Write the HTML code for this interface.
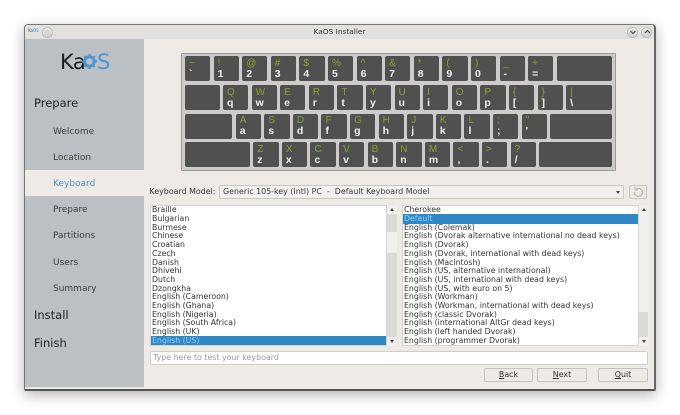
<!DOCTYPE html>
<html><head><meta charset="utf-8"><style>
html,body{margin:0;padding:0;background:#fff}
body{width:680px;height:415px;position:relative;overflow:hidden;font-family:"DejaVu Sans",sans-serif;font-size:8px;color:#3a3a3a;filter:blur(.3px)}
div{position:absolute;box-sizing:border-box}
#win{left:24px;top:24px;width:632px;height:367px;background:#eeebe6;border:1px solid #777;border-bottom:2px solid #555;border-right:2px solid #666;border-radius:4px 4px 2px 2px;box-shadow:0 4px 14px rgba(0,0,0,.3)}
#tb{left:25px;top:25px;width:629px;height:14px;background:#e3e1de;border-radius:3px 3px 0 0;text-align:center;font-size:7.4px;line-height:14px;color:#333}
#side{left:25px;top:39px;width:119px;height:348px;background:#bbc0c4}
#sel{left:25px;top:170px;width:119px;height:26px;background:#eeebe6}
.h{left:34px;font-size:11.5px;line-height:14px;color:#222}
.n{left:53px;font-size:9px;line-height:12px;color:#3c3c3c}
#kb{left:181px;top:53px;width:435px;height:118px;background:#cdccca;border:1px solid #9a9a98}
.r{display:flex;gap:3.3px;left:185px;height:25px;width:428px}
.r span{display:block;position:relative;flex:none;width:25.3px;height:25px;background:#505050;border-radius:2px}
.r b,.r i{position:absolute;left:4px;font-family:"Liberation Sans",sans-serif;font-style:normal;line-height:11px}
.r b{top:1.5px;color:#87a52e;font-size:10px;font-weight:normal}
.r i{top:12.5px;color:#f0f0f0;font-size:10.5px;font-weight:bold}
.lst{background:#fff;top:205px;height:141px;overflow:hidden;border:1px solid #d5d3cf;padding-top:.4px}
.lst p{margin:0;padding-left:1px;height:8.7px;line-height:8.7px;white-space:nowrap;font-size:7.8px;color:#333}
.lst p.s{background:#3088c6;color:#8fd0f5;margin-top:-.7px;padding-top:.7px;box-sizing:border-box;height:9.4px}
.sb{top:205px;width:10px;height:141px;background:#dcdad7}
.th{left:0;width:10px;background:#f1f0ee}
.up,.dn{left:2.5px;width:0;height:0;border-left:2.5px solid transparent;border-right:2.5px solid transparent}
.up{top:3px;border-bottom:3px solid #444}
.dn{bottom:3px;border-top:3px solid #444}
.btn{top:368px;height:14px;background:#eeebe6;border:1px solid #c6c3bd;border-radius:2px;text-align:center;line-height:12px;color:#333;font-size:7.9px}
u{text-decoration:underline}
.wb{width:11px;height:11px;top:26.5px;border-radius:50%;background:#d8d7d5;border:1px solid #bbb;box-shadow:inset 0 1px 1px #fff}
</style></head><body>
<div id="win"></div>
<div id="tb">KaOS Installer</div>
<div class="wb" style="left:42px"></div>
<div class="wb" style="left:626.5px"></div>
<div class="wb" style="left:641px"></div>
<div style="left:28px;top:28px;font-size:4px;line-height:6px;color:#456">Ka<span style="color:#48c">OS</span></div>
<svg style="position:absolute;left:628px;top:27px" width="26" height="10"><path d="M2.5 4l2.5 2.5 2.5-2.5" fill="none" stroke="#444" stroke-width="1"/><path d="M17 6l2.5-2.5 2.5 2.5" fill="none" stroke="#444" stroke-width="1"/></svg>
<div id="side"></div>
<div id="sel"></div>
<div style="left:60px;top:50px;font-family:'DejaVu Sans',sans-serif;font-size:21px;line-height:24px;color:#1c1c1c;letter-spacing:-.5px;white-space:nowrap">Ka</div>
<svg style="position:absolute;left:81px;top:53px" width="17" height="17" viewBox="0 0 17 17"><circle cx="8.5" cy="8.5" r="4.7" fill="none" stroke="#4a97d2" stroke-width="3"/><path d="M8.5 1v15M1 8.5h15M3.2 3.2l10.6 10.6M13.8 3.2L3.2 13.8" stroke="#4a97d2" stroke-width="2.2" stroke-dasharray="2.6 9.8 2.6 0"/></svg>
<div style="left:97px;top:50px;font-family:'DejaVu Sans',sans-serif;font-size:21px;line-height:24px;color:#4a97d2">S</div>
<div class="h" style="top:96px">Prepare</div>
<div class="n" style="top:124.5px;top:126px">Welcome</div>
<div class="n" style="top:152px">Location</div>
<div class="n" style="top:178px;color:#4f93cf">Keyboard</div>
<div class="n" style="top:204px">Prepare</div>
<div class="n" style="top:230px">Partitions</div>
<div class="n" style="top:257px">Users</div>
<div class="n" style="top:283px">Summary</div>
<div class="h" style="top:308px">Install</div>
<div class="h" style="top:336px">Finish</div>

<div id="kb"></div>
<div class="r" style="top:56px"><span><b>~</b><i>`</i></span><span><b>!</b><i>1</i></span><span><b>@</b><i>2</i></span><span><b>#</b><i>3</i></span><span><b>$</b><i>4</i></span><span><b>%</b><i>5</i></span><span><b>^</b><i>6</i></span><span><b>&amp;</b><i>7</i></span><span><b>*</b><i>8</i></span><span><b>(</b><i>9</i></span><span><b>)</b><i>0</i></span><span><b>_</b><i>-</i></span><span><b>+</b><i>=</i></span><span style="width:55.5px"></span></div>
<div class="r" style="top:85px"><span style="width:34.7px"></span><span><b>Q</b><i>q</i></span><span><b>W</b><i>w</i></span><span><b>E</b><i>e</i></span><span><b>R</b><i>r</i></span><span><b>T</b><i>t</i></span><span><b>Y</b><i>y</i></span><span><b>U</b><i>u</i></span><span><b>I</b><i>i</i></span><span><b>O</b><i>o</i></span><span><b>P</b><i>p</i></span><span><b>{</b><i>[</i></span><span><b>}</b><i>]</i></span><span style="width:46px"><b>|</b><i>\</i></span></div>
<div class="r" style="top:113.5px"><span style="width:47.4px"></span><span><b>A</b><i>a</i></span><span><b>S</b><i>s</i></span><span><b>D</b><i>d</i></span><span><b>F</b><i>f</i></span><span><b>G</b><i>g</i></span><span><b>H</b><i>h</i></span><span><b>J</b><i>j</i></span><span><b>K</b><i>k</i></span><span><b>L</b><i>l</i></span><span><b>:</b><i>;</i></span><span><b>"</b><i>'</i></span><span style="width:62px"></span></div>
<div class="r" style="top:142px"><span style="width:65px"></span><span><b>Z</b><i>z</i></span><span><b>X</b><i>x</i></span><span><b>C</b><i>c</i></span><span><b>V</b><i>v</i></span><span><b>B</b><i>b</i></span><span><b>N</b><i>n</i></span><span><b>M</b><i>m</i></span><span><b>&lt;</b><i>,</i></span><span><b>&gt;</b><i>.</i></span><span><b>?</b><i>/</i></span><span style="width:73px"></span></div>

<div style="left:149.5px;top:186px;font-size:7.9px;line-height:11px;color:#333;white-space:nowrap">Keyboard Model:</div>
<div style="left:219px;top:185px;width:405px;height:14px;background:#f3f1ee;border:1px solid #c9c6c0;border-radius:2px;padding-left:3px;font-size:7.9px;line-height:12px;white-space:nowrap">Generic 105-key (Intl) PC <span style="margin:0 2.5px">-</span> Default Keyboard Model</div>
<div style="left:616px;top:191px;width:0;height:0;border-left:2.5px solid transparent;border-right:2.5px solid transparent;border-top:3px solid #444"></div>
<div style="left:629px;top:185px;width:18px;height:14px;background:#eeebe6;border:1px solid #c9c6c0;border-radius:2px"></div>
<svg style="position:absolute;left:632px;top:186px" width="12" height="12" viewBox="0 0 12 12"><path d="M4 3.2a4 4 0 1 1-1.5 3" fill="none" stroke="#b8b6b2" stroke-width="1.2"/><path d="M3 1v3h3" fill="none" stroke="#b8b6b2" stroke-width="1"/></svg>

<div class="lst" style="left:150px;width:237px">
<p>Braille</p><p>Bulgarian</p><p>Burmese</p><p>Chinese</p><p>Croatian</p><p>Czech</p><p>Danish</p><p>Dhivehi</p><p>Dutch</p><p>Dzongkha</p><p>English (Cameroon)</p><p>English (Ghana)</p><p>English (Nigeria)</p><p>English (South Africa)</p><p>English (UK)</p><p class="s">English (US)</p>
</div>
<div class="sb" style="left:387px"><div class="th" style="top:0;height:9px"></div><div class="th" style="top:27px;height:21px"></div><div class="th" style="bottom:0;height:9px"></div><div class="up"></div><div class="dn"></div></div>
<div class="lst" style="left:402px;width:237px">
<p>Cherokee</p><p class="s">Default</p><p>English (Colemak)</p><p>English (Dvorak alternative international no dead keys)</p><p>English (Dvorak)</p><p>English (Dvorak, international with dead keys)</p><p>English (Macintosh)</p><p>English (US, alternative international)</p><p>English (US, international with dead keys)</p><p>English (US, with euro on 5)</p><p>English (Workman)</p><p>English (Workman, international with dead keys)</p><p>English (classic Dvorak)</p><p>English (international AltGr dead keys)</p><p>English (left handed Dvorak)</p><p>English (programmer Dvorak)</p>
</div>
<div class="sb" style="left:639px;width:9px"><div class="th" style="top:0;height:107px;width:9px"></div><div class="th" style="bottom:0;height:9px;width:9px"></div><div class="up"></div><div class="dn"></div></div>

<div style="left:150px;top:351px;width:498px;height:14px;background:#fff;border:1px solid #d0cdc8;border-radius:2px;padding-left:2px;font-size:7.9px;line-height:12px;color:#9a9a9a">Type here to test your keyboard</div>
<div class="btn" style="left:484px;width:49px"><u>B</u>ack</div>
<div class="btn" style="left:537px;width:50px"><u>N</u>ext</div>
<div class="btn" style="left:598px;width:50px"><u>Q</u>uit</div>
</body></html>
